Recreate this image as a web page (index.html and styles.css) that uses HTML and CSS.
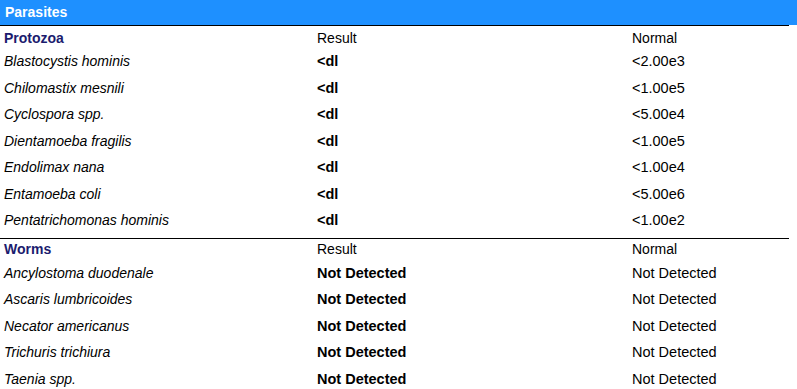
FILE: index.html
```html
<!DOCTYPE html>
<html>
<head>
<meta charset="utf-8">
<link rel="stylesheet" href="styles.css">
</head>
<body>
<div class="title">Parasites</div>
<div class="panel">
  <div class="section protozoa">
    <div class="row head"><span class="group">Protozoa</span><span>Result</span><span>Normal</span></div>
    <div class="row"><span class="name">Blastocystis hominis</span><span class="res">&lt;dl</span><span>&lt;2.00e3</span></div>
    <div class="row"><span class="name">Chilomastix mesnili</span><span class="res">&lt;dl</span><span>&lt;1.00e5</span></div>
    <div class="row"><span class="name">Cyclospora spp.</span><span class="res">&lt;dl</span><span>&lt;5.00e4</span></div>
    <div class="row"><span class="name">Dientamoeba fragilis</span><span class="res">&lt;dl</span><span>&lt;1.00e5</span></div>
    <div class="row"><span class="name">Endolimax nana</span><span class="res">&lt;dl</span><span>&lt;1.00e4</span></div>
    <div class="row"><span class="name">Entamoeba coli</span><span class="res">&lt;dl</span><span>&lt;5.00e6</span></div>
    <div class="row"><span class="name">Pentatrichomonas hominis</span><span class="res">&lt;dl</span><span>&lt;1.00e2</span></div>
  </div>
  <div class="section worms">
    <div class="row head"><span class="group">Worms</span><span>Result</span><span>Normal</span></div>
    <div class="row"><span class="name">Ancylostoma duodenale</span><span class="res">Not Detected</span><span>Not Detected</span></div>
    <div class="row"><span class="name">Ascaris lumbricoides</span><span class="res">Not Detected</span><span>Not Detected</span></div>
    <div class="row"><span class="name">Necator americanus</span><span class="res">Not Detected</span><span>Not Detected</span></div>
    <div class="row"><span class="name">Trichuris trichiura</span><span class="res">Not Detected</span><span>Not Detected</span></div>
    <div class="row"><span class="name">Taenia spp.</span><span class="res">Not Detected</span><span>Not Detected</span></div>
  </div>
</div>
</body>
</html>
```

FILE: styles.css
```css
html, body {
  margin: 0;
  padding: 0;
  background: #ffffff;
}
body {
  font-family: "Liberation Sans", Arial, sans-serif;
  font-size: 14px;
  color: #000000;
  overflow: hidden;
}
.title {
  background: #1e90ff;
  color: #ffffff;
  font-weight: bold;
  font-size: 14px;
  height: 25px;
  line-height: 24px;
  padding-left: 5px;
}
.panel {
  width: 789px;
}
.section {
  border-top: 1px solid #000000;
}
.protozoa {
  padding-bottom: 4px;
}
.row {
  display: grid;
  grid-template-columns: 313px 315px 1fr;
  padding-left: 4px;
  height: 26.5px;
  line-height: 26.5px;
  font-size: 14.5px;
  white-space: nowrap;
}
.row.head {
  height: 22px;
  line-height: 24px;
  font-size: 14px;
}
.worms .row.head {
  height: 21px;
  line-height: 21px;
}
.group {
  font-weight: bold;
  color: #1b1b6e;
}
.name {
  font-style: italic;
  font-size: 14px;
}
.res {
  font-weight: bold;
}
```
